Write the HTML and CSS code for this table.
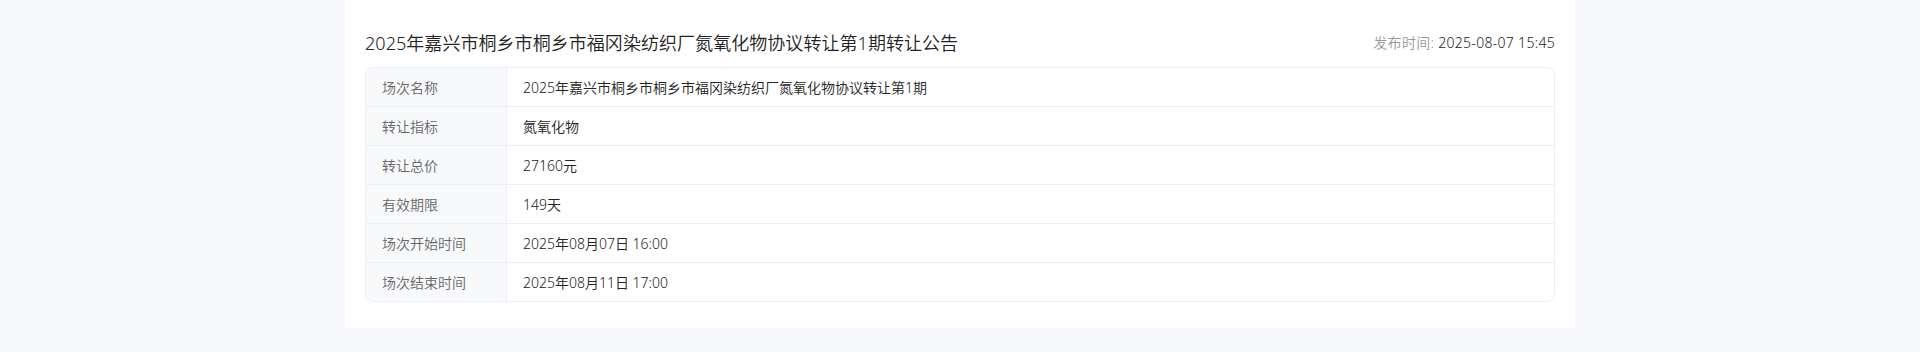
FILE: index.html
```html
<!DOCTYPE html>
<html lang="zh-CN">
<head>
<meta charset="utf-8">
<title>转让公告</title>
<link rel="stylesheet" href="styles.css">
</head>
<body>
  <main class="page">
    <section class="notice">
      <header class="notice-head">
        <h1 class="notice-title">2025年嘉兴市桐乡市桐乡市福冈染纺织厂氮氧化物协议转让第1期转让公告</h1>
        <div class="notice-time"><span class="time-label">发布时间:</span> <span class="time-value">2025-08-07 15:45</span></div>
      </header>
      <div class="info-table">
        <div class="info-row">
          <div class="info-label">场次名称</div>
          <div class="info-value">2025年嘉兴市桐乡市桐乡市福冈染纺织厂氮氧化物协议转让第1期</div>
        </div>
        <div class="info-row">
          <div class="info-label">转让指标</div>
          <div class="info-value">氮氧化物</div>
        </div>
        <div class="info-row">
          <div class="info-label">转让总价</div>
          <div class="info-value">27160元</div>
        </div>
        <div class="info-row">
          <div class="info-label">有效期限</div>
          <div class="info-value">149天</div>
        </div>
        <div class="info-row">
          <div class="info-label">场次开始时间</div>
          <div class="info-value">2025年08月07日 16:00</div>
        </div>
        <div class="info-row">
          <div class="info-label">场次结束时间</div>
          <div class="info-value">2025年08月11日 17:00</div>
        </div>
      </div>
    </section>
  </main>
</body>
</html>
```

FILE: styles.css
```css
* {
  box-sizing: border-box;
}

html,
body {
  margin: 0;
  padding: 0;
  background: #f7f8fc;
}

body {
  font-family: "Noto Sans", "Noto Sans CJK SC", sans-serif;
  font-weight: 350;
  color: #333;
  font-size: 14px;
}

.page {
  display: flex;
  justify-content: center;
}

.notice {
  width: 1230px;
  background: #fff;
  padding: 31px 20px 26px;
}

.notice-head {
  display: flex;
  align-items: center;
  justify-content: space-between;
  height: 24px;
  margin-bottom: 12px;
}

.notice-title {
  margin: 0;
  font-size: 18px;
  line-height: 24px;
  font-weight: 350;
  color: #222;
  letter-spacing: 0.05px;
}

.notice-time {
  font-size: 14px;
  line-height: 20px;
  color: #222;
  white-space: nowrap;
  letter-spacing: 0.3px;
}

.time-label {
  color: #999;
}

.info-table {
  border: 1px solid #ebeef5;
  border-radius: 8px;
  overflow: hidden;
}

.info-row {
  display: flex;
  height: 39px;
  border-bottom: 1px solid #ebeef5;
}

.info-row:last-child {
  height: 38px;
  border-bottom: none;
}

.info-label {
  width: 141px;
  flex: none;
  display: flex;
  align-items: center;
  padding-left: 16px;
  background: #f8f9fb;
  border-right: 1px solid #ebeef5;
  color: #666;
}

.info-value {
  flex: 1;
  display: flex;
  align-items: center;
  padding-left: 16px;
  color: #222;
}
```
